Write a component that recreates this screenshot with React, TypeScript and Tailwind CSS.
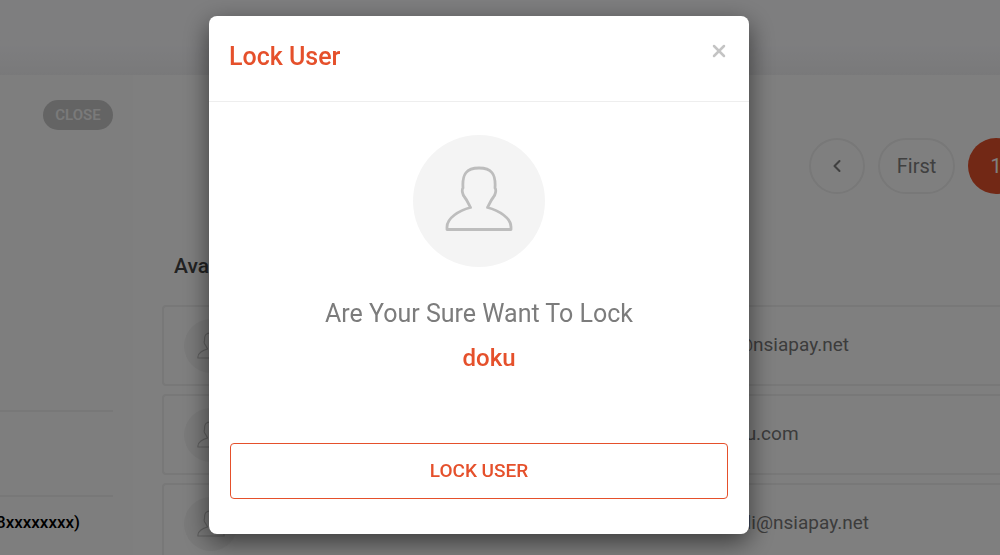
import { ChevronLeft, X } from "lucide-react"

const users = [
    { id: 1, email: "@nsiapay.net" },
    { id: 2, email: "ku.com" },
    { id: 3, email: "idi@nsiapay.net" },
]

function PersonIcon({ className }: { className: string }) {
    return (
        <svg viewBox="0 0 68 66" fill="none" stroke="currentColor" strokeWidth={2.8} strokeLinejoin="round" className={className} aria-hidden="true">
            <path d="M25.500 41.500C14 44.500 2 52 2 61V63.500H66V61C66 52 54 44.500 42.500 41.500C45 36.500 46 34 48.500 31C50.500 29 51.500 23.500 50 22C51 8 46.500 2 34 2C21.500 2 17 8 18 22C16.500 23.500 17.500 29 19.500 31C22 34 23 36.500 25.500 41.500Z" />
        </svg>
    )
}

function Sidebar() {
    return (
        <aside className="flex w-[133px] shrink-0 flex-col overflow-hidden bg-[#fcfcfc] pt-[25px] pr-5">
            <button className="h-[30px] w-[70px] self-end rounded-full bg-[#c8c8c8] text-[15px] font-semibold text-[#f4f4f4]">CLOSE</button>
            <div className="h-[282px] border-b-2 border-[#f0f0f0]" />
            <div className="h-[85px] border-b-2 border-[#f0f0f0]" />
            <p className="flex w-20 justify-end pt-[11px] text-[17px] leading-7 font-medium text-black">8xxxxxxxx)</p>
        </aside>
    )
}

function Pagination() {
    return (
        <nav className="flex gap-[13px] pl-[647px] text-[20px] text-[#808080]">
            <button aria-label="Previous" className="flex size-[56px] shrink-0 items-center justify-center rounded-full border-2 border-[#f0f0f0]">
                <ChevronLeft className="size-5" strokeWidth={2.5} />
            </button>
            <button className="h-[56px] w-[77px] shrink-0 rounded-full border-2 border-[#f0f0f0]">First</button>
            <button className="size-[56px] shrink-0 rounded-full bg-[#e5502b] text-white">1</button>
        </nav>
    )
}

function LockUserModal() {
    return (
        <div className="fixed inset-0 flex items-start justify-center bg-black/50 pt-4 pr-[42px]">
            <div role="dialog" aria-modal="true" aria-labelledby="lock-title" className="w-[540px] rounded-lg bg-white pb-[35px] shadow-[0_8px_26px_rgba(0,0,0,0.55)]">
                <div className="flex h-[86px] items-start justify-between border-b border-[#eeeeee] px-5 pt-[25px]">
                    <h2 id="lock-title" className="text-[25px] leading-8 font-medium text-[#e5502b]">Lock User</h2>
                    <button aria-label="Close" className="text-[#c4c4c4]">
                        <X className="size-5" strokeWidth={3} />
                    </button>
                </div>
                <div className="flex flex-col items-center px-[21px] pt-[33px]">
                    <div className="flex size-[132px] items-center justify-center rounded-full bg-[#f4f4f4]">
                        <PersonIcon className="mb-1 h-[66px] w-[68px] text-[#bdbdbd]" />
                    </div>
                    <p className="mt-[25px] text-center text-[25px] leading-[44px] text-[#7c7c7c]">
                        Are Your Sure Want To Lock
                        <strong className="block pl-5 text-[24px] leading-[44px] font-medium text-[#e5502b]">doku</strong>
                    </p>
                    <button className="mt-[63px] h-[56px] w-full rounded border border-[#e5502b] text-[19px] font-medium text-[#e5502b]">LOCK USER</button>
                </div>
            </div>
        </div>
    )
}

export default function App() {
    return (
        <div className="flex h-screen flex-col overflow-hidden bg-white font-[Roboto,sans-serif]">
            <header className="h-[75px] shrink-0 bg-linear-to-b from-[#fcfcff] from-60% to-[#f3f3f5]" />
            <div className="flex min-h-0 flex-1">
                <Sidebar />
                <main className="min-w-0 flex-1 overflow-hidden pt-[63px] pl-[29px]">
                    <Pagination />
                    <h1 className="mt-14 pl-3 text-[21px] leading-8 font-medium text-[#444444]">Available Users</h1>
                    <ul className="mt-[23px] flex flex-col gap-2">
                        {users.map((user) => (
                            <li key={user.id} className="flex h-[81px] shrink-0 items-center rounded-l border-2 border-r-0 border-[#f0f0f0] pl-5">
                                <span className="flex size-[54px] shrink-0 items-center justify-center rounded-full bg-[#f4f4f4]">
                                    <PersonIcon className="h-[27px] w-7 text-[#bdbdbd]" />
                                </span>
                                <span className="pl-[498px] text-[19px] text-[#787878]">{user.email}</span>
                            </li>
                        ))}
                    </ul>
                </main>
            </div>
            <LockUserModal />
        </div>
    )
}
